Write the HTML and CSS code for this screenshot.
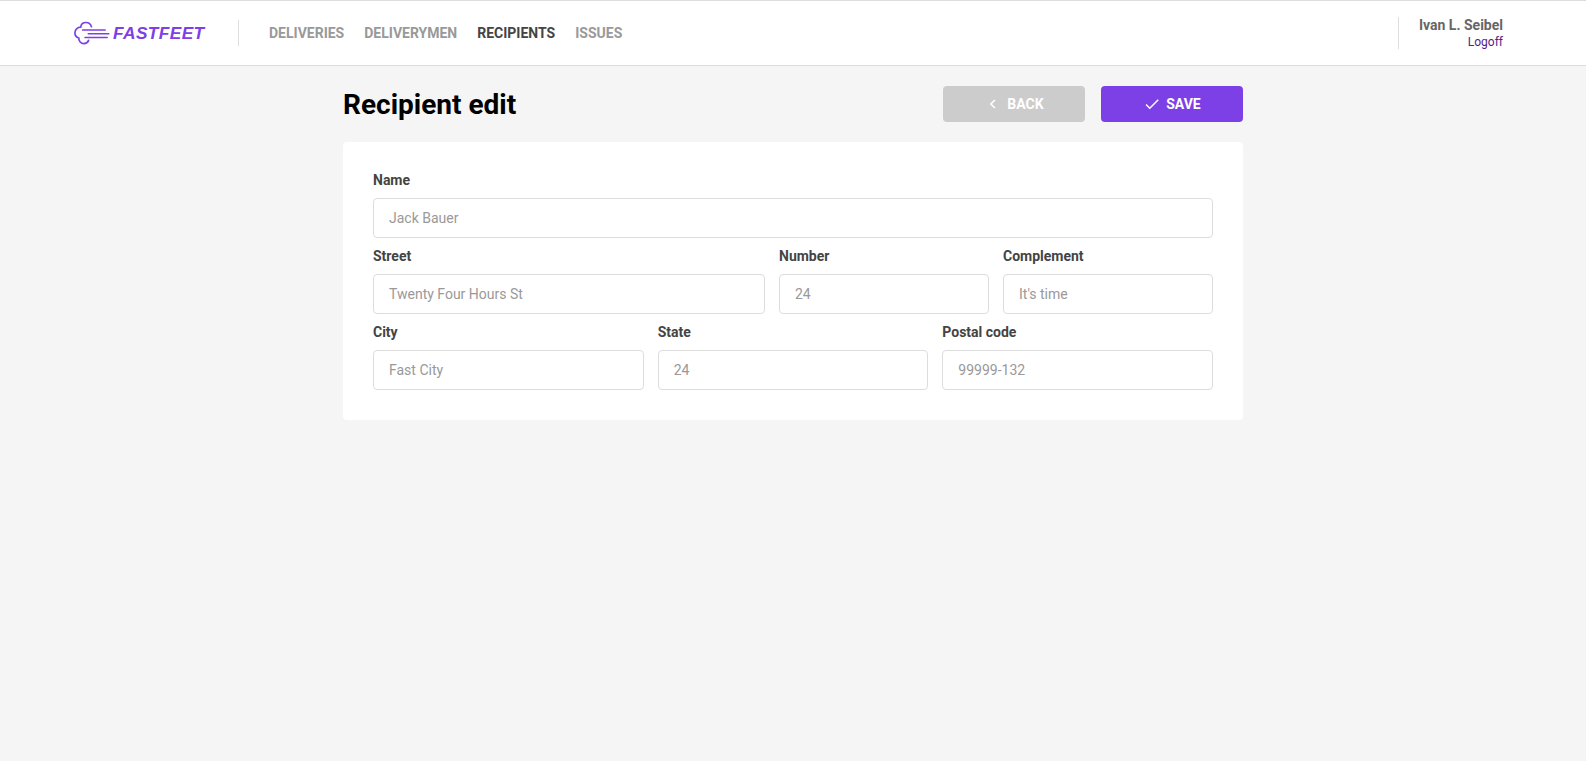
FILE: index.html
```html
<!DOCTYPE html>
<html lang="en">
<head>
<meta charset="utf-8">
<title>FastFeet</title>
<link rel="stylesheet" href="styles.css">
</head>
<body>
<header class="header">
  <div class="brand">
    <svg class="brand-icon" viewBox="0 0 36 24" fill="none" stroke="currentColor" stroke-width="1.5" stroke-linecap="round">
      <path stroke-width="1.700" d="M17.400 5.700C16.800 3.200 14.600 1.500 12 1.500c-2.800 0-5 1.900-5.300 4.700C3.500 6.200.9 8.600.9 11.700c0 2.600 1.600 4.600 3.900 5.300-.3 3.100 2.200 5.600 5.100 5.600 2.200 0 3.900-1.200 4.700-3.200"/>
      <path d="M8.500 9.100h22.700M14.200 12.700h20.600M11 16.500h22.200"/>
    </svg>
    <span class="brand-name">FASTFEET</span>
  </div>
  <nav class="nav">
    <a class="nav-link">DELIVERIES</a>
    <a class="nav-link">DELIVERYMEN</a>
    <a class="nav-link nav-link-active">RECIPIENTS</a>
    <a class="nav-link">ISSUES</a>
  </nav>
  <div class="profile">
    <strong class="profile-name">Ivan L. Seibel</strong>
    <a class="logoff">Logoff</a>
  </div>
</header>
<main class="content">
  <div class="toolbar">
    <h1 class="title">Recipient edit</h1>
    <div class="actions">
      <button class="button button-back" type="button">
        <svg class="button-icon" viewBox="0 0 18 18" fill="none" stroke="currentColor" stroke-width="1.6"><path d="M10.900 5L6.900 9l4 4"/></svg>
        <span>BACK</span>
      </button>
      <button class="button button-save" type="button">
        <svg class="button-icon" viewBox="0 0 24 24" fill="currentColor"><path d="M9 16.170L4.830 12l-1.420 1.410L9 19 21 7l-1.410-1.410z"/></svg>
        <span>SAVE</span>
      </button>
    </div>
  </div>
  <form class="card">
    <div class="row">
      <label class="field">Name<input class="input" placeholder="Jack Bauer"></label>
    </div>
    <div class="row row-address">
      <label class="field">Street<input class="input" placeholder="Twenty Four Hours St"></label>
      <label class="field">Number<input class="input" placeholder="24"></label>
      <label class="field">Complement<input class="input" placeholder="It's time"></label>
    </div>
    <div class="row row-city">
      <label class="field">City<input class="input" placeholder="Fast City"></label>
      <label class="field">State<input class="input" placeholder="24"></label>
      <label class="field">Postal code<input class="input" placeholder="99999-132"></label>
    </div>
  </form>
</main>
</body>
</html>
```

FILE: styles.css
```css
* {
  box-sizing: border-box;
  margin: 0;
  padding: 0;
}

body {
  min-height: 100vh;
  background: #f5f5f5;
  font-family: Roboto, "Liberation Sans", sans-serif;
  font-size: 14px;
}

.header {
  display: flex;
  align-items: center;
  height: 66px;
  padding: 0 83px 0 74px;
  background: #fff;
  border: solid #ddd;
  border-width: 1px 0;
}

.brand {
  display: flex;
  align-items: center;
  width: 165px;
  height: 26px;
  border-right: 1px solid #ddd;
  color: #7d40e7;
}

.brand-icon {
  width: 36px;
  height: 24px;
}

.brand-name {
  margin-left: 3px;
  font: italic bold 17.3px/24px "Liberation Sans", Arial, sans-serif;
  letter-spacing: 0.4px;
}

.nav {
  display: flex;
  gap: 20px;
  margin-left: 30px;
}

.nav-link {
  color: #999;
  font-weight: bold;
}

.nav-link-active {
  color: #444;
}

.profile {
  display: flex;
  flex-direction: column;
  align-items: flex-end;
  margin-left: auto;
  padding-left: 20px;
  border-left: 1px solid #ddd;
}

.profile-name {
  color: #666;
  line-height: 16px;
}

.logoff {
  margin-top: 2px;
  color: #551a8b;
  font-size: 12px;
  line-height: 14px;
}

.content {
  width: 900px;
  margin: 20px auto 0;
}

.toolbar {
  display: flex;
  align-items: center;
  justify-content: space-between;
  height: 36px;
}

.title {
  font-size: 28px;
  line-height: 33px;
}

.actions {
  display: flex;
  gap: 16px;
}

.button {
  display: flex;
  align-items: center;
  justify-content: center;
  gap: 5px;
  width: 142px;
  height: 36px;
  border: 0;
  border-radius: 4px;
  color: #fff;
  font: bold 14px Roboto, sans-serif;
}

.button-back {
  background: #ccc;
}

.button-save {
  background: #7d40e7;
}

.button-icon {
  width: 18px;
  height: 18px;
}

.card {
  display: flex;
  flex-direction: column;
  gap: 10px;
  margin-top: 20px;
  padding: 30px;
  background: #fff;
  border-radius: 4px;
}

.row {
  display: grid;
  gap: 14px;
}

.row-address {
  grid-template-columns: 392px 210px 210px;
}

.row-city {
  grid-template-columns: repeat(3, 1fr);
}

.field {
  display: flex;
  flex-direction: column;
  gap: 10px;
  min-width: 0;
  color: #444;
  font-weight: bold;
  line-height: 16px;
}

.input {
  width: 100%;
  height: 40px;
  padding: 0 15px;
  border: 1px solid #ddd;
  border-radius: 4px;
  font: 14px Roboto, sans-serif;
}

.input::placeholder {
  color: #999;
}
```
